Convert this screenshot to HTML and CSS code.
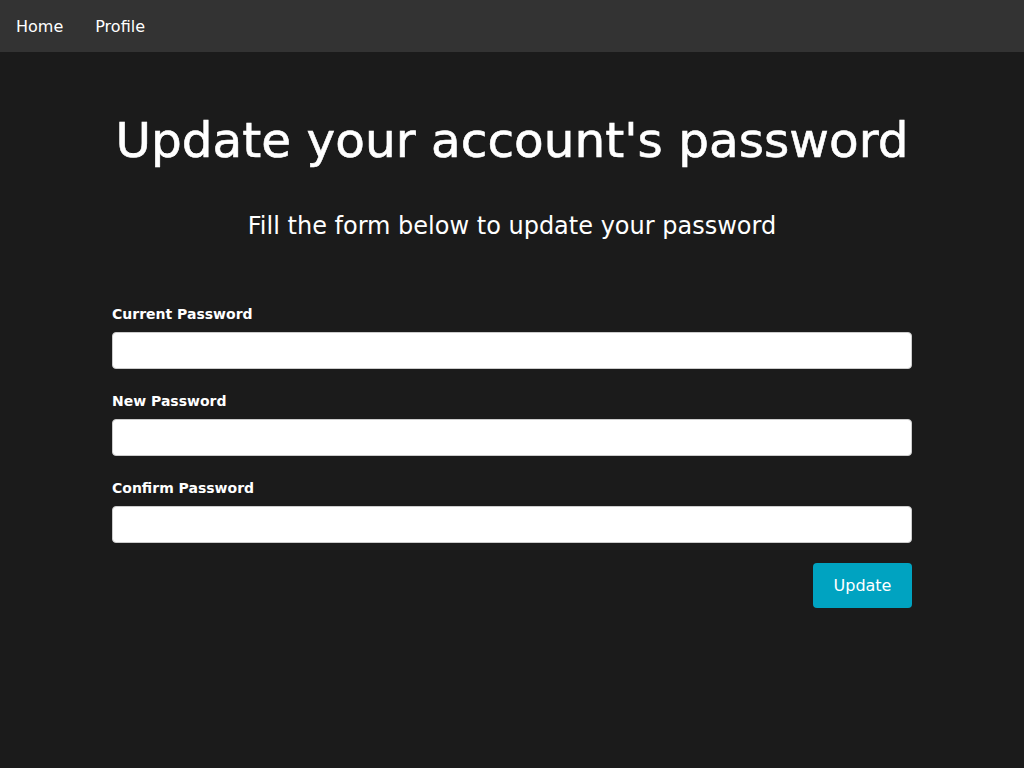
FILE: index.html
```html
<!DOCTYPE html>
<html>
<head>
<meta charset="utf-8">
<link rel="stylesheet" href="styles.css">
</head>
<body>
<nav class="nav">
  <a class="nav-link" href="#">Home</a>
  <a class="nav-link" href="#">Profile</a>
</nav>
<main class="main">
  <h1 class="title">Update your account's password</h1>
  <p class="subtitle">Fill the form below to update your password</p>
  <form class="form">
    <label class="label">Current Password</label>
    <input class="input" type="password">
    <label class="label">New Password</label>
    <input class="input" type="password">
    <label class="label">Confirm Password</label>
    <input class="input" type="password">
    <div class="actions">
      <button class="btn" type="button">Update</button>
    </div>
  </form>
</main>
</body>
</html>
```
FILE: styles.css
```css
* { box-sizing: border-box; }
html, body { margin: 0; padding: 0; }
body {
  background: #1b1b1b;
  color: #fff;
  font-family: "DejaVu Sans", sans-serif;
  height: 768px;
}
.nav {
  background: #333333;
  height: 52px;
  display: flex;
  align-items: center;
  padding: 0 16px;
  gap: 32px;
}
.nav-link {
  color: #fff;
  text-decoration: none;
  font-size: 16px;
}
.main {
  width: 800px;
  margin: 0 auto;
  padding-top: 58px;
}
.title {
  margin: 0;
  text-align: center;
  font-size: 48.5px;
  font-weight: 500;
  line-height: 60px;
  -webkit-text-stroke: 0.6px #fff;
}
.subtitle {
  margin: 41px 0 0;
  text-align: center;
  font-size: 24px;
  line-height: 30px;
}
.form {
  margin-top: 61px;
  display: flex;
  flex-direction: column;
}
.label {
  font-size: 14px;
  font-weight: 700;
  line-height: 24px;
  margin-bottom: 6px;
}
.input {
  height: 37px;
  border: 1px solid #ccc;
  border-radius: 4px;
  background: #fff;
  margin-bottom: 20px;
}
.actions {
  display: flex;
  justify-content: flex-end;
}
.btn {
  background: #00a3c1;
  color: #fff;
  border: none;
  border-radius: 4px;
  width: 99px;
  height: 45px;
  font-family: inherit;
  font-size: 16px;
}
```
